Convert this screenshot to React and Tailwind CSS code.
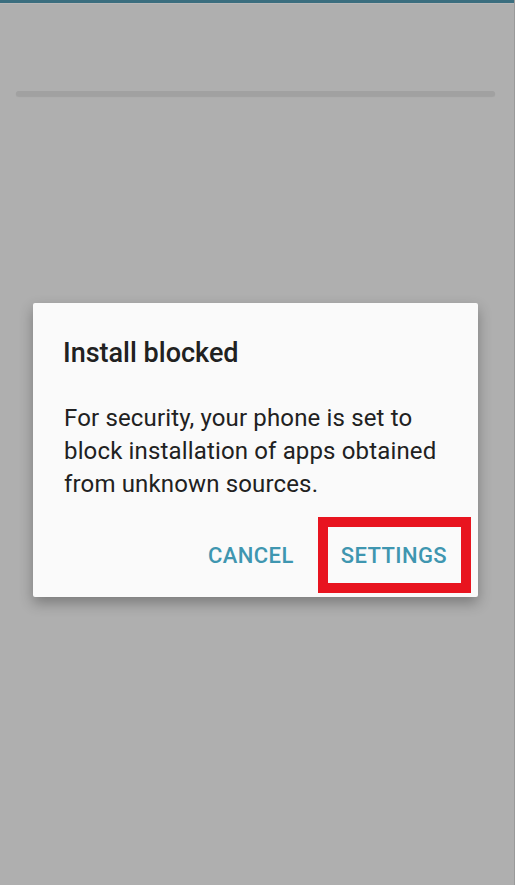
const App = () => {
    return <div className="relative w-[515px] h-[885px] bg-[#afafaf] overflow-hidden" style={{fontFamily: 'Roboto, "Noto Sans", sans-serif'}}>
        <div className="h-[3px] bg-[#3b6e7f]"></div>
        <div className="h-px bg-[#b8b8b8]"></div>
        <div className="ml-[16px] mr-[20px] mt-[87px] h-[5px] bg-[#a1a1a1] rounded-sm shadow-[0_1px_1px_rgba(0,0,0,0.08)]"></div>
        <div className="absolute top-0 right-0 w-[1px] h-full bg-[#9a9a9a]"></div>

        <div className="ml-[33px] mt-[207px] w-[445px] h-[294px] bg-[#fafafa] rounded-[2px] shadow-[0_6px_14px_rgba(0,0,0,0.3)] flex flex-col">
            <h2 className="pl-[30px] pt-[34px] text-[27px] leading-[32px] font-medium text-[#212121]">Install blocked</h2>
            <p className="pl-[31px] pt-[33px] text-[24px] leading-[33px] text-[#212121] tracking-[0.15px] whitespace-nowrap">
                For security, your phone is set to<br />
                block installation of apps obtained<br />
                from unknown sources.
            </p>
            <div className="mt-auto mb-[26px] pr-[31px] flex justify-end items-center gap-[47px] text-[22px] leading-[30px] font-medium text-[#3f96b0] tracking-[0.4px]">
                <span>CANCEL</span>
                <span>SETTINGS</span>
            </div>
        </div>

        <div className="absolute left-[318px] top-[517px] w-[153px] h-[76px] border-[10px] border-[#e8141f]"></div>
    </div>
};

export default App;
